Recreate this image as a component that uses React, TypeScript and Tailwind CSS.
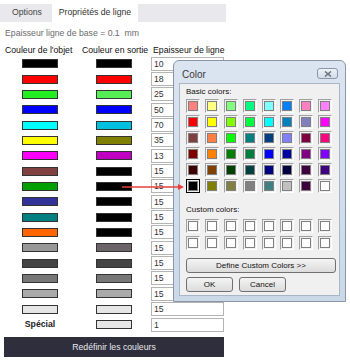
import React from 'react';

const rows: { left: string | null; right: string; value: string }[] = [
  { left: '#000000', right: '#000000', value: '10' },
  { left: '#ff0000', right: '#ff0000', value: '18' },
  { left: '#22ee22', right: '#55ee55', value: '25' },
  { left: '#0000ff', right: '#0000ff', value: '50' },
  { left: '#00ffff', right: '#00c0e0', value: '70' },
  { left: '#ffff00', right: '#808000', value: '35' },
  { left: '#ff00ff', right: '#c000c0', value: '13' },
  { left: '#804040', right: '#000000', value: '15' },
  { left: '#00a000', right: '#000000', value: '15' },
  { left: '#333399', right: '#000000', value: '15' },
  { left: '#008080', right: '#000000', value: '15' },
  { left: '#ff6600', right: '#000000', value: '15' },
  { left: '#999999', right: '#6a6468', value: '15' },
  { left: '#444444', right: '#444444', value: '15' },
  { left: '#777777', right: '#777777', value: '15' },
  { left: '#aaaaaa', right: '#aaaaaa', value: '15' },
  { left: '#e6e6e6', right: '#e6e6e6', value: '15' },
  { left: null, right: '#e6e6e6', value: '1' },
];

const basic = [
  '#ff8080', '#ffff80', '#80ff80', '#00ff80', '#80ffff', '#0080ff', '#ff80c0', '#ff80ff',
  '#ff0000', '#ffff00', '#80ff00', '#00ff40', '#00ffff', '#0080c0', '#8080c0', '#ff00ff',
  '#804040', '#ff8040', '#00ff00', '#008080', '#004080', '#8080ff', '#800040', '#ff0080',
  '#800000', '#ff8000', '#008000', '#008040', '#0000ff', '#0000a0', '#800080', '#8000ff',
  '#400000', '#804000', '#004000', '#004040', '#000080', '#000040', '#400040', '#400080',
  '#000000', '#808000', '#808040', '#808080', '#408080', '#c0c0c0', '#400040', '#ffffff',
];

const Swatch = ({ color }: { color: string }) => (
  <div
    className="w-[36px] h-[9px] border border-[#333]"
    style={{ backgroundColor: color }}
  />
);

const Cell = ({ color, selected }: { color: string; selected?: boolean }) => (
  <div
    className={
      selected
        ? 'w-[14px] h-[14px] border border-black p-[1px] bg-[#f0f0f0]'
        : 'w-[14px] h-[14px] border border-t-[#a0a0a0] border-l-[#a0a0a0] border-r-white border-b-white p-[1px]'
    }
  >
    <div className="w-full h-full border border-[#808080]" style={{ backgroundColor: color }} />
  </div>
);

const winBtn =
  'h-[15px] border border-[#707070] rounded-[3px] bg-gradient-to-b from-[#f4f4f4] to-[#dcdcdc] flex items-center justify-center text-[8px] text-[#111]';

function ColorDialog() {
  return (
    <div className="absolute left-[173px] top-[60px] w-[173px] h-[242px] rounded-t-[6px] border border-[#8996a6] bg-gradient-to-b from-[#dbe5f1] to-[#cad8e8] px-[5px] pb-[5px] pt-[22px] font-['Liberation_Sans',sans-serif]">
      <div className="absolute left-[8px] top-[6px] text-[10px] text-[#3a3a3a]">Color</div>
      <div className="absolute left-[143px] top-[7px] w-[21px] h-[11px] rounded-[3px] border border-[#8b97a6] bg-gradient-to-b from-[#eef2f7] to-[#d3dce8] flex items-center justify-center">
        <svg width="8" height="6" viewBox="0 0 8 6">
          <path d="M1 0.5 L7 5.5 M7 0.5 L1 5.5" stroke="#6b7683" strokeWidth="1.6" />
        </svg>
      </div>
      <div className="h-full border border-[#a9b6c6] bg-[#f0f0f0] pl-[6px] pt-[3px]">
        <div className="text-[8px] text-[#111] leading-[10px]">Basic colors:</div>
        <div className="mt-[2px] grid grid-cols-[repeat(8,14px)] gap-x-[4.9px] gap-y-[2px]">
          {basic.map((c, i) => (
            <Cell key={i} color={c} selected={i === 40} />
          ))}
        </div>
        <div className="mt-[12px] text-[8px] text-[#111] leading-[10px]">Custom colors:</div>
        <div className="mt-[4px] grid grid-cols-[repeat(8,14px)] gap-x-[4.9px] gap-y-[3px]">
          {Array.from({ length: 16 }).map((_, i) => (
            <Cell key={i} color="#ffffff" />
          ))}
        </div>
        <div className={winBtn + ' mt-[8px] w-[150px]'}>Define Custom Colors &gt;&gt;</div>
        <div className="mt-[4px] flex gap-[6px]">
          <div className={winBtn + ' w-[47px]'}>OK</div>
          <div className={winBtn + ' w-[47px]'}>Cancel</div>
        </div>
      </div>
    </div>
  );
}

export default function App() {
  return (
    <div className="relative w-[350px] h-[361px] bg-white overflow-hidden whitespace-nowrap font-['Liberation_Sans',sans-serif] text-[8.7px]">
      <div className="pt-[4px]">
        <div className="w-[226px] h-[18px] bg-[#e8e8ed] flex text-[#444]">
          <div className="h-[18px] pl-[12px] pr-[10px] flex items-center">Options</div>
          <div className="h-[18px] w-[86px] bg-white flex items-center justify-center text-[#333]">Propriétés de ligne</div>
        </div>
      </div>

      <div className="pl-[5px] mt-[5px] text-[#6b6b6b] leading-[12px]">Epaisseur ligne de base = 0.1&nbsp;&nbsp;mm</div>

      <div className="mt-[5px] flex text-[#111] leading-[12px]">
        <div className="pl-[5px] w-[82px]">Couleur de l'objet</div>
        <div className="w-[71px]">Couleur en sortie</div>
        <div>Epaisseur de ligne</div>
      </div>

      <div className="flex flex-col">
        {rows.map((r, i) => (
          <div key={i} className="h-[15.35px] flex items-center">
            <div className="w-[80px] flex justify-center">
              {r.left ? (
                <Swatch color={r.left} />
              ) : (
                <span className="font-bold text-[#222]">Spécial</span>
              )}
            </div>
            <div className="w-[68px] flex justify-center">
              <Swatch color={r.right} />
            </div>
            <div className="ml-[3px] w-[73px] h-[14px] border border-[#b4b4b4] bg-white text-[#333] leading-[12px] pl-[2px]">
              {r.value}
            </div>
          </div>
        ))}
      </div>

      <div className="mt-[5px] ml-[4px] w-[220px] h-[20px] bg-[#2e2e3c] flex items-center justify-center text-[#e8e8ee]">
        Redéfinir les couleurs
      </div>

      <ColorDialog />

      <svg className="absolute left-0 top-0" width="350" height="361">
        <line x1="122" y1="187" x2="180" y2="187" stroke="#e8403a" strokeWidth="1.5" />
        <path d="M178 184 L184 187 L178 190 Z" fill="#e8403a" />
      </svg>
    </div>
  );
}
